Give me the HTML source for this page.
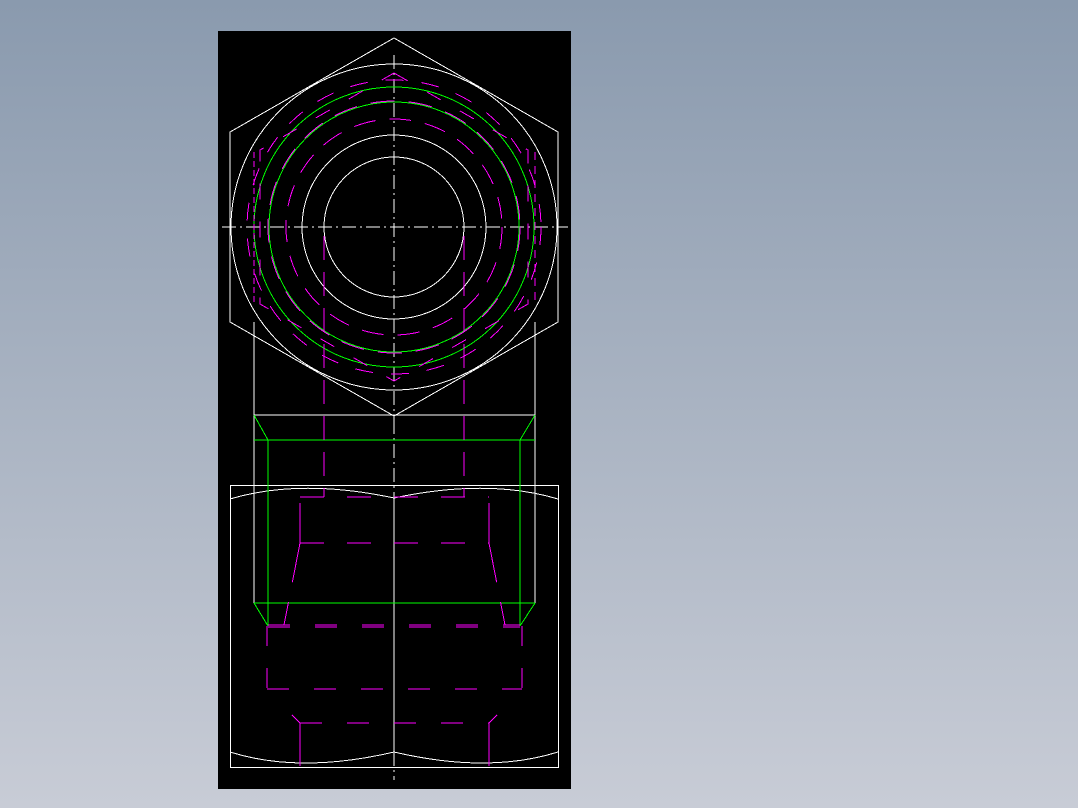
<!DOCTYPE html>
<html><head><style>
html,body{margin:0;padding:0;width:1078px;height:808px;overflow:hidden;background:linear-gradient(#8a9aae,#c8ccd6);}
svg{position:absolute;left:0;top:0}
</style></head><body>
<svg width="1078" height="808" viewBox="0 0 1078 808" fill="none" stroke-width="1" shape-rendering="crispEdges">
<rect x="218" y="31" width="353" height="758" fill="#000"/>
<g stroke="#fff">
<polygon points="394,38 558,132 558,322 394,416 230,322 230,132"/>
<circle cx="394" cy="227" r="163"/>
<circle cx="394" cy="227" r="92"/>
<circle cx="394" cy="227" r="70"/>
<line x1="222" y1="227" x2="568" y2="227" stroke-dasharray="14,4,2,4"/>
<line x1="394" y1="55" x2="394" y2="420" stroke-dasharray="14,4,2,4"/>
<line x1="254" y1="322" x2="254" y2="603"/>
<line x1="535" y1="322" x2="535" y2="603"/>
<line x1="254" y1="415" x2="535" y2="415"/>
<rect x="230.5" y="485.5" width="328" height="282"/>
<path d="M230,499 Q300,478 394,498 Q488,478 558,499"/>
<path d="M230,752 Q300,774 394,752 Q488,774 558,752"/>
<line x1="394" y1="420" x2="394" y2="498" stroke-dasharray="14,4,2,4"/>
<line x1="394" y1="498" x2="394" y2="752"/>
<line x1="394" y1="752" x2="394" y2="780" stroke-dasharray="14,4,2,4"/>
</g>
<g stroke="#00ff00">
<circle cx="394" cy="227" r="140"/>
<circle cx="394" cy="227" r="125"/>
<line x1="254" y1="440" x2="535" y2="440"/>
<line x1="254" y1="603" x2="535" y2="603"/>
<line x1="268" y1="440" x2="268" y2="626"/>
<line x1="520" y1="440" x2="520" y2="626"/>
<path d="M254,415 L268,440 M535,415 L520,440 M254,603 L268,626 M535,603 L520,626"/>
</g>
<g stroke="#ff00ff">
<polygon points="394,73 528,150 528,304 394,381 260,304 260,150" stroke-dasharray="16,22"/>
<circle cx="394" cy="227" r="147" stroke-dasharray="18,18"/>
<circle cx="394" cy="227" r="126" stroke-dasharray="24,14"/>
<circle cx="394" cy="227" r="108" stroke-dasharray="22,14"/>
<line x1="324" y1="236" x2="324" y2="497" stroke-dasharray="24,12"/>
<line x1="464" y1="236" x2="464" y2="497" stroke-dasharray="24,12"/>
<line x1="254" y1="152" x2="254" y2="302" stroke-dasharray="6,3"/>
<line x1="535" y1="152" x2="535" y2="302" stroke-dasharray="8,6"/>
<path d="M300,543 L300,497 M489,543 L489,497 M300,543 L284,625 M489,543 L505,625" stroke-dasharray="40,20"/>
<line x1="300" y1="497" x2="489" y2="497" stroke-dasharray="24,23"/>
<line x1="300" y1="543" x2="489" y2="543" stroke-dasharray="24,23"/>
<line x1="268" y1="625" x2="520" y2="625" stroke-dasharray="22,25"/>
<line x1="268" y1="627" x2="520" y2="627" stroke-dasharray="22,25"/>
<path d="M267,626 L267,689 L275,697 M522,626 L522,689 L514,697" stroke-dasharray="20,22"/>
<line x1="267" y1="689" x2="522" y2="689" stroke-dasharray="22,25"/>
<path d="M292,715 L300,723 L300,766 M497,715 L489,723 L489,766"/>
<line x1="300" y1="723" x2="489" y2="723" stroke-dasharray="22,25"/>
</g>
</svg>
</body></html>
